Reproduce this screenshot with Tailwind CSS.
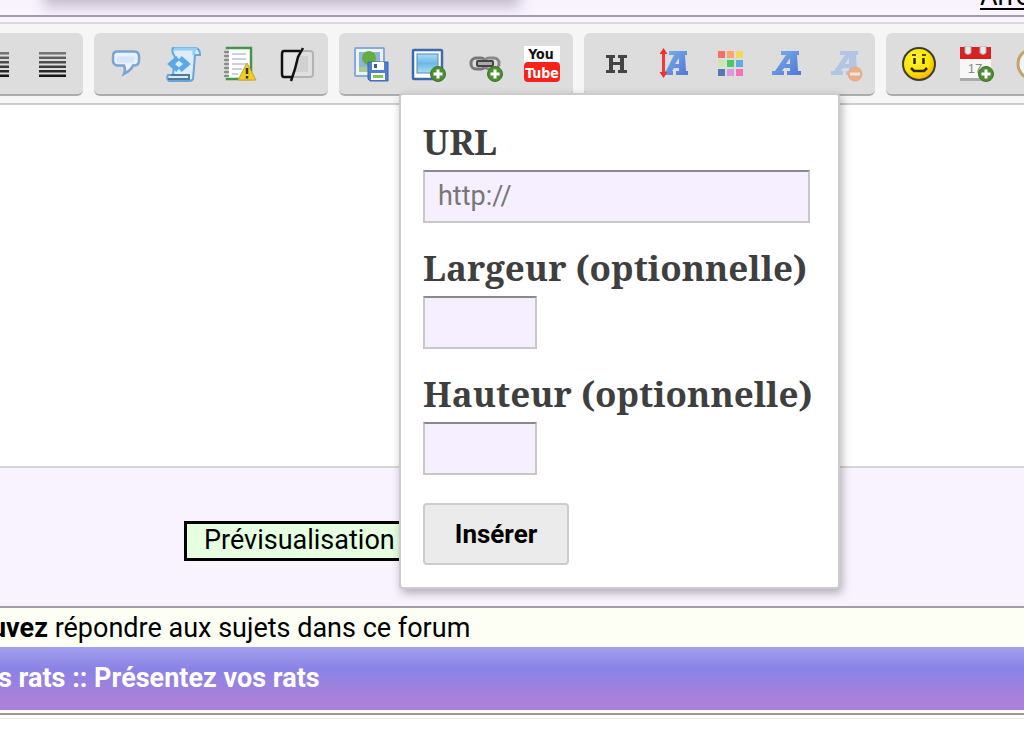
<!DOCTYPE html>
<html lang="fr">
<head>
<meta charset="utf-8">
<title>Présentez vos rats</title>
<script src="https://cdn.jsdelivr.net/npm/@tailwindcss/browser@4"></script>
</head>
<body class="bg-white text-black font-[Roboto,sans-serif] text-[27px] leading-[30px] overflow-hidden">
<svg class="absolute size-0" aria-hidden="true">
  <defs>
    <linearGradient id="blue" x1="0" y1="0" x2="1" y2="1"><stop offset="0" stop-color="#79b2ea"/><stop offset="1" stop-color="#5276d6"/></linearGradient>
    <linearGradient id="sky" x1="0" y1="0" x2="0" y2="1"><stop offset="0" stop-color="#a9dcf8"/><stop offset=".5" stop-color="#6db9e6"/><stop offset="1" stop-color="#a5e0f4"/></linearGradient>
    <linearGradient id="bars" x1="0" y1="0" x2="0" y2="1"><stop offset="0" stop-color="#777"/><stop offset="1" stop-color="#111"/></linearGradient>
    <radialGradient id="sun" cx=".4" cy=".35" r=".7"><stop offset="0" stop-color="#fff23a"/><stop offset=".6" stop-color="#ffe600"/><stop offset="1" stop-color="#f5a800"/></radialGradient>
    <g id="plus"><circle cx="28" cy="28" r="7.500" fill="#4b8f32" stroke="#3b7527"/><path d="M28 23.500v9M23.500 28h9" stroke="#fff" stroke-width="3"/></g>
    <path id="bigA" fill-rule="evenodd" d="M12 5h18v4h-2l1 16h3v4H18v-4h3v-3h-6l-2 3h2v4H3v-4h3L17 9h-5zm9 7-4 6h4z"/>
    <path id="lines" d="M5 6h27v2.500H5zM5 10.500h27V13H5zM5 15h27v2.500H5zM5 19.500h27V22H5zM5 24h27v2.500H5zM5 28.500h27V31H5z"/>
  </defs>
</svg>

<header class="relative h-[17px] overflow-hidden border-b-2 border-[#a39da7] bg-[#f9f3ff]">
  <div class="absolute -top-5 left-[48px] h-5 w-[468px] shadow-[0_3px_14px_4px_rgba(60,40,70,0.28)]"></div>
  <a href="#" class="absolute -top-[19px] left-[980px] underline decoration-2 underline-offset-3">Arrêter</a>
</header>

<main class="relative">
  <div class="h-[5px] bg-[#f9f3ff]"></div>
  <div role="toolbar" aria-label="Mise en forme" class="flex gap-[11px] overflow-hidden border-y-2 border-t-[#d9d5dc] border-b-[#cccccc] bg-[#f6f6f6] pt-[9px] pb-[7px]">
    <div class="-ml-[37px] flex shrink-0 rounded-md border-b-2 border-[#adadad] bg-[#dddddd] px-[3px]">
      <button aria-label="Aligner à droite" class="flex h-[61px] w-[57px] items-center justify-center"><svg class="size-9" viewBox="0 0 36 36"><use href="#lines" fill="url(#bars)"/></svg></button>
      <button aria-label="Justifier" class="flex h-[61px] w-[57px] items-center justify-center"><svg class="size-9" viewBox="0 0 36 36"><use href="#lines" fill="url(#bars)"/></svg></button>
    </div>
    <div class="flex shrink-0 rounded-md border-b-2 border-[#adadad] bg-[#dddddd] px-[3px]">
      <button aria-label="Citer" class="flex h-[61px] w-[57px] items-center justify-center"><svg class="size-9" viewBox="0 0 36 36"><path d="M9 5.500h17q5 0 5 5v4q0 5-5 5h-1q-2 5-9 8.500 2-4 0-8.500H9q-4-1-4-5v-4q0-5 4-5z" fill="#e9f2fd" stroke="#7ba3d3" stroke-width="2.500"/><path d="M9 12h18M9 15h17" stroke="#d6e6fa" stroke-width="3"/></svg></button>
      <button aria-label="Code" class="flex h-[61px] w-[57px] items-center justify-center"><svg class="size-9" viewBox="0 0 36 36"><path d="M8 2h23q4 1 4 7h-5l-2 24q-1 2-4 2H4q-3-2-1-6h5l2-18q-4-5-2-9z" fill="#dcecfb" stroke="#66a5dc" stroke-width="2"/><path d="M9 3h21q-2 3-1 6" fill="none" stroke="#8fd0f7" stroke-width="3"/><path d="M3 33h21M6 29h18v5" fill="none" stroke="#52799e" stroke-width="2"/><path d="m13 12-7 6 7 6M15 12l7 6-7 6" fill="none" stroke="#58a8ea" stroke-width="5"/></svg></button>
      <button aria-label="Spoiler" class="flex h-[61px] w-[57px] items-center justify-center"><svg class="size-9" viewBox="0 0 36 36"><path d="M5 2h24v31H5z" fill="#fff" stroke="#44944b" stroke-width="2.500"/><path d="M5 3v29" stroke="#ccc" stroke-width="3"/><path d="M2 6h5M2 10h5M2 14h5M2 18h5M2 22h5M2 26h5M2 30h5" stroke="#777" stroke-width="1.500"/><path d="M10 8h14M10 13h14M10 18h14M10 23h10M10 28h6" stroke="#b9c1d8" stroke-width="1.500"/><path d="m25 17 9 17H16z" fill="#f0cf24" stroke="#c8a126" stroke-linejoin="round"/><path d="M25 22v6M25 30v2.500" stroke="#3a3000" stroke-width="2.500"/></svg></button>
      <button aria-label="Masquer" class="flex h-[61px] w-[57px] items-center justify-center"><svg class="size-9" viewBox="0 0 36 36"><rect x="4" y="5" width="30" height="26" rx="3" fill="#dfdfdf" stroke="#b3b3b3" stroke-width="2"/><rect x="9" y="10" width="20" height="16" fill="#d1d1d1"/><path d="M21 5H5q-2 0-2 3v20q0 3 2 3h8" fill="#e4e4e4" stroke="#111" stroke-width="2.500"/><path d="m24 2-5 9-3 12-4 12" fill="none" stroke="#111" stroke-width="2.500"/></svg></button>
    </div>
    <div class="flex shrink-0 rounded-md border-b-2 border-[#adadad] bg-[#dddddd] px-[3px]">
      <button aria-label="Héberger une image" class="flex h-[61px] w-[57px] items-center justify-center"><svg class="size-9" viewBox="0 0 36 36"><rect x="2" y="2" width="29" height="28" rx="1" fill="#eef3fb" stroke="#87a9dc" stroke-width="2"/><path d="M6 6h21v20H6z" fill="#8cb4dd"/><path d="M6 21h21v5H6z" fill="#a6cc8e"/><circle cx="16" cy="12" r="7" fill="#65ad3f"/><path d="M15 17h2v7h-2z" fill="#946d45"/><path d="M15 16h20v19H17l-2-2z" fill="#4d80d0" stroke="#3867b7"/><path d="M19 16h12v8H19zM18 27h14v7H18z" fill="#fff"/><path d="M21 18h3v4h-3z" fill="#385d9c"/><path d="M20 29h10v3H20z" fill="#7fca45"/></svg></button>
      <button aria-label="Image" class="flex h-[61px] w-[57px] items-center justify-center"><svg class="size-9" viewBox="0 0 36 36"><rect x="3" y="4" width="29" height="29" rx="1" fill="#fff" stroke="#3d69ae" stroke-width="2.500"/><rect x="7" y="8" width="21" height="19" fill="url(#sky)" stroke="#5a86b8"/><use href="#plus"/></svg></button>
      <button aria-label="Lien" class="flex h-[61px] w-[57px] items-center justify-center"><svg class="size-9" viewBox="0 0 36 36"><rect x="4" y="12" width="15" height="11" rx="5" fill="none" stroke="#777" stroke-width="3"/><rect x="17" y="12" width="15" height="11" rx="5" fill="none" stroke="#888" stroke-width="3"/><rect x="10" y="15" width="16" height="5" rx="1" fill="#aaa" stroke="#444" stroke-width="2"/><use href="#plus"/></svg></button>
      <button aria-label="YouTube" class="flex h-[61px] w-[57px] items-center justify-center"><svg class="size-9" viewBox="0 0 36 36"><path d="M0 0h36v34H0z" fill="#fff"/><rect y="16" width="36" height="20" rx="4" fill="#f8221b"/><text x="17" y="13" text-anchor="middle" font-family="DejaVu Sans Condensed, DejaVu Sans" font-weight="700" font-size="14" fill="#111">You</text><text x="18" y="32" text-anchor="middle" font-family="DejaVu Sans Condensed, DejaVu Sans" font-weight="700" font-size="14" fill="#fff">Tube</text></svg></button>
    </div>
    <div class="flex shrink-0 rounded-md border-b-2 border-[#adadad] bg-[#dddddd] px-[3px]">
      <button aria-label="Titres" class="flex h-[61px] w-[57px] items-center justify-center"><svg class="size-9" viewBox="0 0 36 36"><path d="M8 9h9v3h-2v4h7v-4h-2V9h9v3h-3v12h3v3h-9v-3h2v-5h-7v5h2v3H8v-3h3V12H8z" fill="#444"/></svg></button>
      <button aria-label="Taille" class="flex h-[61px] w-[57px] items-center justify-center"><svg class="size-9" viewBox="0 0 36 36"><path fill-rule="evenodd" d="M14 5h18v4h-2l1 16h2v4H21v-4h3v-3h-5l-2 3h1v4H9v-4h2L19 9h-5zm10 7-4 6h4z" fill="url(#blue)"/><path d="M7 7h3v20H7z" fill="#f23a3a"/><path d="m8.500 2 4 6h-8zM8.500 32l4-6h-8z" fill="#ee3030"/></svg></button>
      <button aria-label="Couleur" class="flex h-[61px] w-[57px] items-center justify-center"><svg class="size-9" viewBox="0 0 36 36"><path d="M6 5h7v7H6z" fill="#f96c6c"/><path d="M15 5h7v7h-7z" fill="#fba66b"/><path d="M24 5h7v7h-7z" fill="#f5d95f"/><path d="M6 14h7v7H6z" fill="#cce9ac"/><path d="M15 14h7v7h-7z" fill="#4cc964"/><path d="M24 14h7v7h-7z" fill="#5aade9"/><path d="M6 23h7v7H6z" fill="#5579b4"/><path d="M15 23h7v7h-7z" fill="#d69be0"/><path d="M24 23h7v7h-7z" fill="#fb72b2"/></svg></button>
      <button aria-label="Police" class="flex h-[61px] w-[57px] items-center justify-center"><svg class="size-9" viewBox="0 0 36 36"><use href="#bigA" fill="url(#blue)"/></svg></button>
      <button aria-label="Supprimer la mise en forme" class="flex h-[61px] w-[57px] items-center justify-center"><svg class="ml-1 size-9" viewBox="0 0 36 36"><use href="#bigA" fill="#b1c6e4"/><circle cx="27" cy="28" r="7.500" fill="#e5ae8f"/><path d="M22 28h10" stroke="#f6e3d8" stroke-width="3"/></svg></button>
    </div>
    <div class="flex shrink-0 rounded-md border-b-2 border-[#adadad] bg-[#dddddd] px-[3px]">
      <button aria-label="Émoticônes" class="flex h-[61px] w-[57px] items-center justify-center"><svg class="ml-0.5 size-9" viewBox="0 0 36 36"><circle cx="18" cy="18" r="16" fill="url(#sun)" stroke="#3d3d35" stroke-width="2"/><path d="M13.500 12v6M22.500 12v6M10 22l3 3h10l3-3" fill="none" stroke="#2c2600" stroke-width="2.500"/><path d="M11 9h4M21 9h4" stroke="#5c4c00" stroke-width="2"/></svg></button>
      <button aria-label="Date" class="flex h-[61px] w-[57px] items-center justify-center"><svg class="ml-0.5 size-9" viewBox="0 0 36 36"><path d="M2 3h31v31H2z" fill="#f7f7f7"/><path d="M2 32h31v3H2z" fill="#aaa"/><path d="M2 1h31v12H2z" fill="#da2021"/><path d="M7 0h6v7q-3 3-6 0zM22 0h6v7q-3 3-6 0z" fill="#e9e9e9" stroke="#aaa"/><text x="17" y="27" text-anchor="middle" font-family="Liberation Sans" font-size="13" fill="#888">17</text><use href="#plus"/></svg></button>
      <button aria-label="Heure" class="flex h-[61px] w-[57px] items-center justify-center"><svg class="ml-0.5 size-9" viewBox="0 0 36 36"><circle cx="18" cy="18" r="15" fill="#eef4fa" stroke="#c0a468" stroke-width="3"/><path d="M18 9v9h6" fill="none" stroke="#555" stroke-width="2"/></svg></button>
    </div>
  </div>

  <textarea aria-label="Message" class="block h-[361px] w-full resize-none bg-white outline-none"></textarea>

  <div class="border-t-2 border-[#d6d6d6] bg-[#f9f3ff] pt-[53px] pb-[45px] pl-[184px]">
    <button class="flex h-10 items-center border-[3px] border-black bg-[#e5ffe0] px-[17px] pb-0.5">Prévisualisation</button>
  </div>

  <form class="absolute top-[76px] left-[399px] min-w-[441px] rounded-sm border-2 border-[#cccccc] bg-white px-[22px] pt-6 pb-[22px] shadow-[2px_4px_10px_rgba(0,0,0,0.3)]">
    <div class="mb-[22px]">
      <label for="url" class="mb-[6px] block h-[45px] font-['Noto_Serif','Droid_Serif','DejaVu_Serif_Condensed','DejaVu_Serif',serif] text-[35px] leading-[45px] font-bold text-[#3f3f3f]">URL</label>
      <input id="url" type="text" placeholder="http://" class="block h-[53px] w-[387px] border-2 border-[#c8c8c8] border-t-[#8a8a8a] bg-[#f6efff] px-[13px] pb-0.5 outline-none placeholder:text-[#777777]">
    </div>
    <div class="mb-[22px]">
      <label for="w" class="mb-[6px] block h-[45px] font-['Noto_Serif','Droid_Serif','DejaVu_Serif_Condensed','DejaVu_Serif',serif] text-[35px] leading-[45px] font-bold text-[#3f3f3f]">Largeur (optionnelle)</label>
      <input id="w" type="text" class="block h-[53px] w-[114px] border-2 border-[#c8c8c8] border-t-[#8a8a8a] bg-[#f6efff] px-[13px] outline-none">
    </div>
    <div class="mb-[28px]">
      <label for="h" class="mb-[6px] block h-[45px] font-['Noto_Serif','Droid_Serif','DejaVu_Serif_Condensed','DejaVu_Serif',serif] text-[35px] leading-[45px] font-bold text-[#3f3f3f]">Hauteur (optionnelle)</label>
      <input id="h" type="text" class="block h-[53px] w-[114px] border-2 border-[#c8c8c8] border-t-[#8a8a8a] bg-[#f6efff] px-[13px] outline-none">
    </div>
    <button type="button" class="block h-[62px] w-[146px] rounded border-2 border-[#cccccc] bg-[#ebebeb] px-[29px] text-[26px] font-bold">Insérer</button>
  </form>
</main>

<p class="h-[41px] overflow-hidden border-t-2 border-[#a39da7] bg-[#fdfff5] pt-[5px] whitespace-nowrap"><span class="-ml-[9px]"><b>uvez</b> répondre aux sujets dans ce forum</span></p>
<nav class="flex h-[63px] items-center bg-linear-to-b from-[#a3a0ee] via-[#8a82e6] via-35% to-[#a981d8] to-85% pb-px font-bold whitespace-nowrap text-white"><a href="#" class="-ml-0.5">s rats :: Présentez vos rats</a></nav>
<div class="mt-[3px] h-[2px] bg-[#999999]"></div>
<div class="mt-[3px] h-px bg-[#eeeeee]"></div>
</body>
</html>
